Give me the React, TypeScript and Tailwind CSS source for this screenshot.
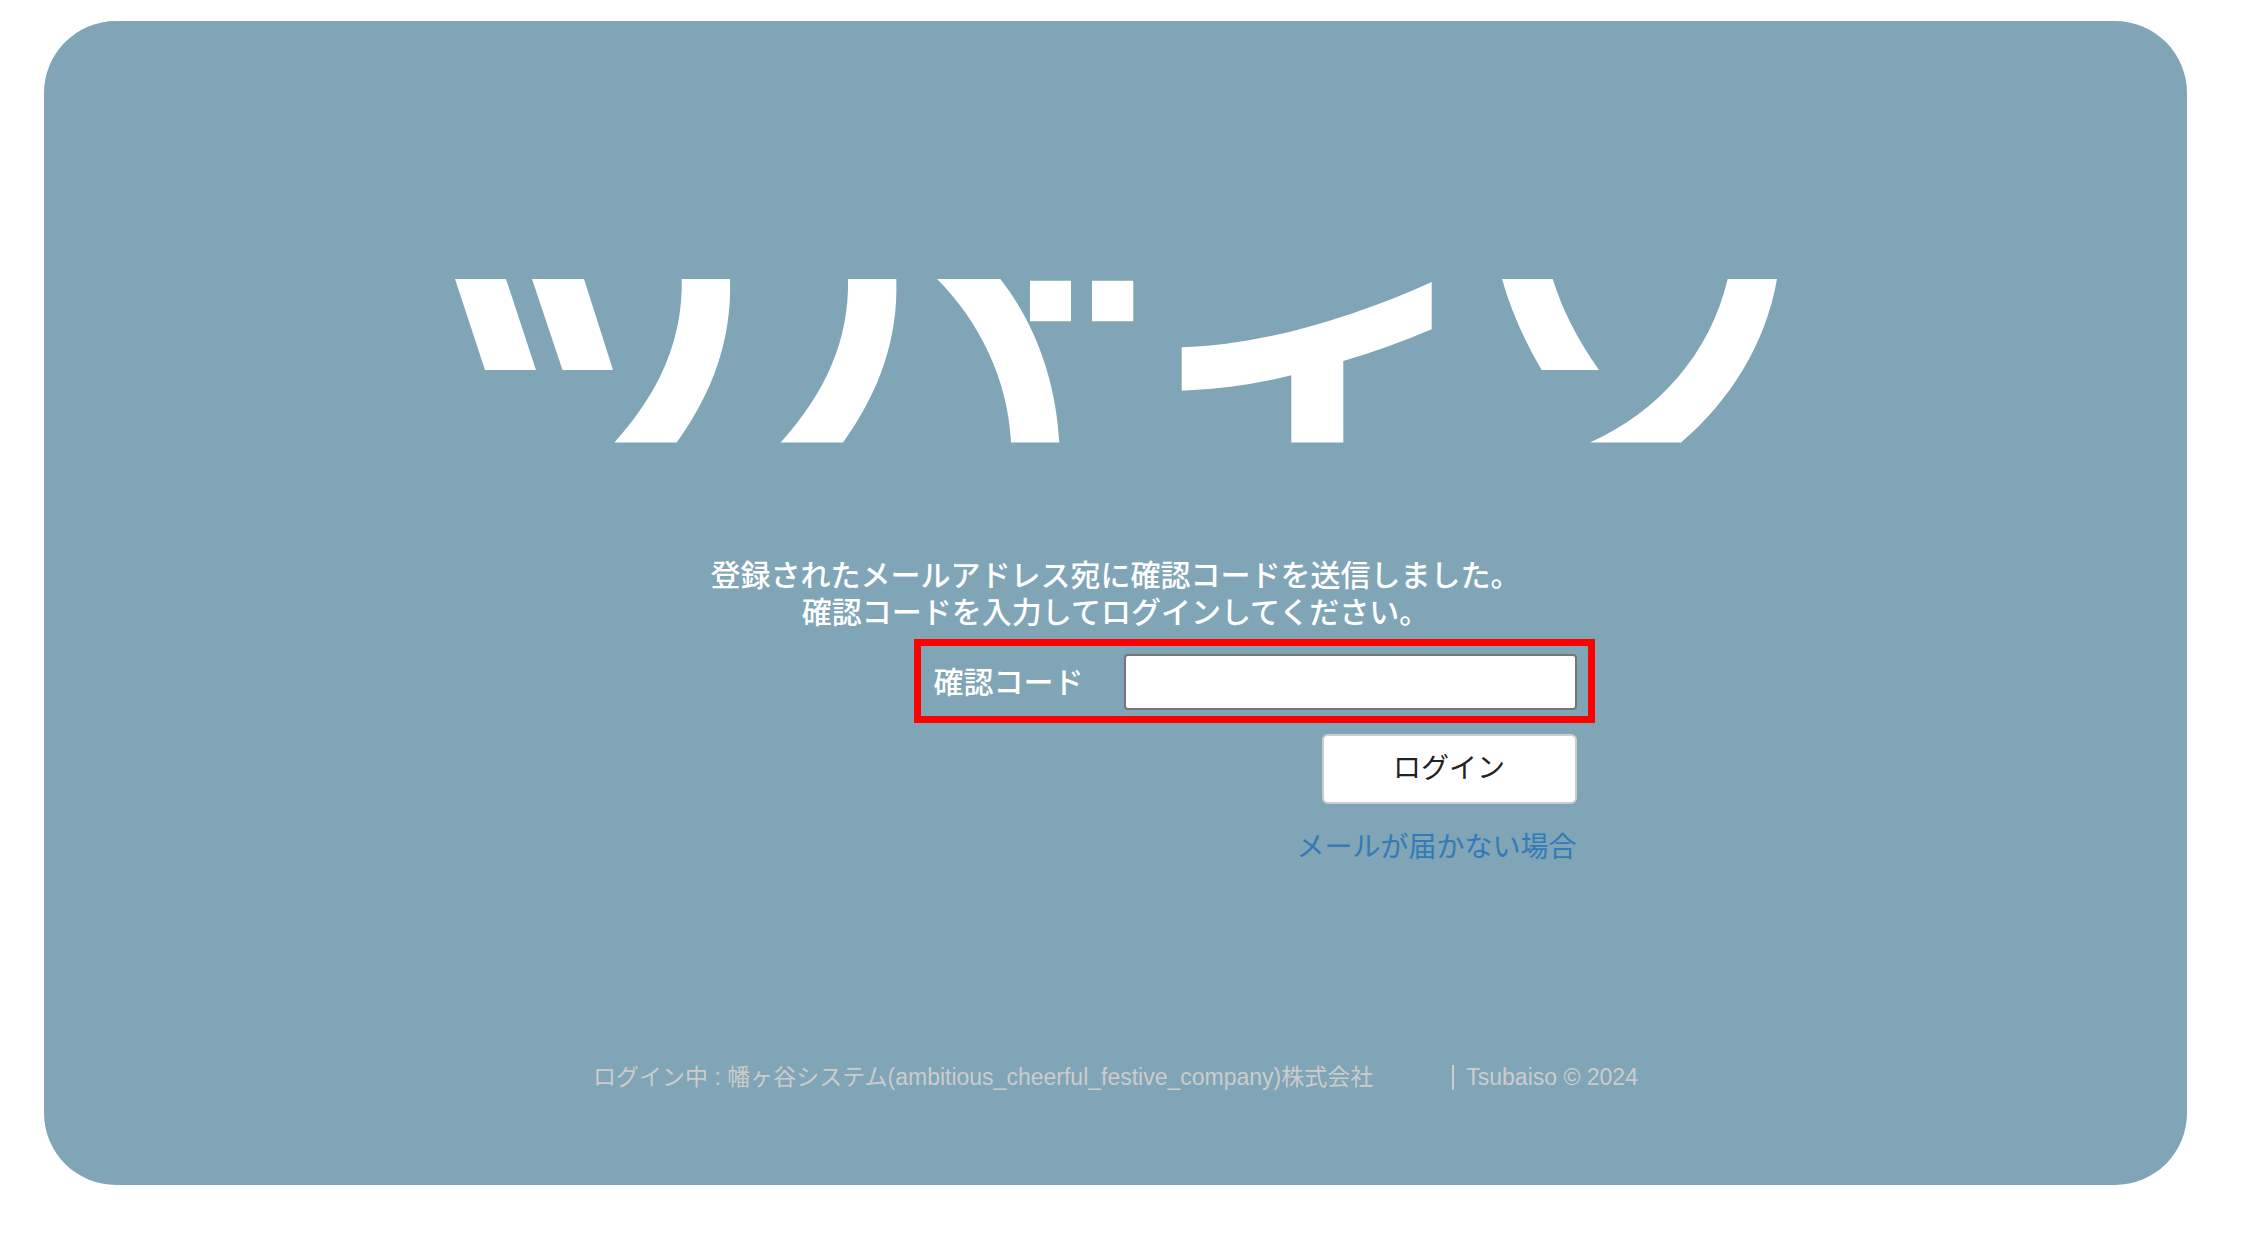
function Logo() {
  return (
    <svg viewBox="0 0 1322 164" role="img" aria-label="ツバイソ" className="w-full max-w-[1322px] fill-white">
      <path d="M0 0H51L81 91H30Z" />
      <path d="M77 0H129L158 91H107.5Z" />
      <path d="M226.7 0H275C277 60 258 113 221.7 163.5H159.3C205 113 228 60 226.7 0Z" />
      <path d="M393 0H441.3C443.3 60 424.3 113 388 163.5H325.6C371.3 113 394.3 60 393 0Z" />
      <path d="M482 0H545.3C582 47 601 104 604.3 163.5H556C553 100 524 42 482 0Z" />
      <path d="M575 1.7H616V42.3H575Z" />
      <path d="M637 1.7H678.3V42.3H637Z" />
      <path d="M726.7 68.3C806 66 895 40 976.7 3V50.3Q933 69 888.3 82V163.5H836.3V96.3Q782 110 726.7 111.7Z" />
      <path d="M1047 0H1097.7Q1112 46 1144 91H1086.7Q1060 46 1047 0Z" />
      <path d="M1272.7 0H1322C1311 64 1275 122 1226 163.5H1135C1203 133 1255 75 1272.7 0Z" />
    </svg>
  );
}

export default function App() {
  return (
    <div className="bg-white pt-[21px] pr-[54px] pb-[48px] pl-[44px] font-['Liberation_Sans','Noto_Sans_CJK_JP',sans-serif]">
      <div className="flex flex-col items-center rounded-[72px] bg-[#7fa5b6] px-6 pt-[258px] pb-[92px]">
        <Logo />
        <main className="mt-[114px] flex w-full max-w-[958px] flex-col items-end">
          <p className="w-full text-center text-[30px] leading-[37px] font-medium text-white">
            登録されたメールアドレス宛に確認コードを送信しました。
            <br />
            確認コードを入力してログインしてください。
          </p>
          <form className="mt-2 flex flex-col items-end" onSubmit={(e) => e.preventDefault()}>
            <div className="flex items-center border-[7px] border-[#ff0000] pt-[8px] pr-[11px] pb-[6px] pl-[13px]">
              <label htmlFor="code" className="text-[30px] leading-[37px] font-medium text-white">
                確認コード
              </label>
              <input
                id="code"
                type="text"
                className="ml-[40px] h-[56px] w-[453px] rounded-[4px] border-2 border-[#767676] bg-white px-2 text-[30px] text-black"
              />
            </div>
            <button
              type="submit"
              className="mt-[11px] mr-[18px] h-[70px] w-[255px] rounded-[6px] border-2 border-[#cccccc] bg-white text-[28px] leading-[36px] text-[#222222]"
            >
              ログイン
            </button>
          </form>
          <a href="#help" className="mt-[26px] mr-[18px] text-[28px] leading-[36px] text-[#337ab7]">
            メールが届かない場合
          </a>
        </main>
        <footer className="mt-[195px] flex items-center text-[23px] leading-[32px] text-[#cccccc]">
          <span>ログイン中 : 幡ヶ谷システム(ambitious_cheerful_festive_company)株式会社</span>
          <span className="ml-[79px] border-l-2 border-[#cccccc] pl-[12px] leading-[25px]">Tsubaiso © 2024</span>
        </footer>
      </div>
    </div>
  );
}
